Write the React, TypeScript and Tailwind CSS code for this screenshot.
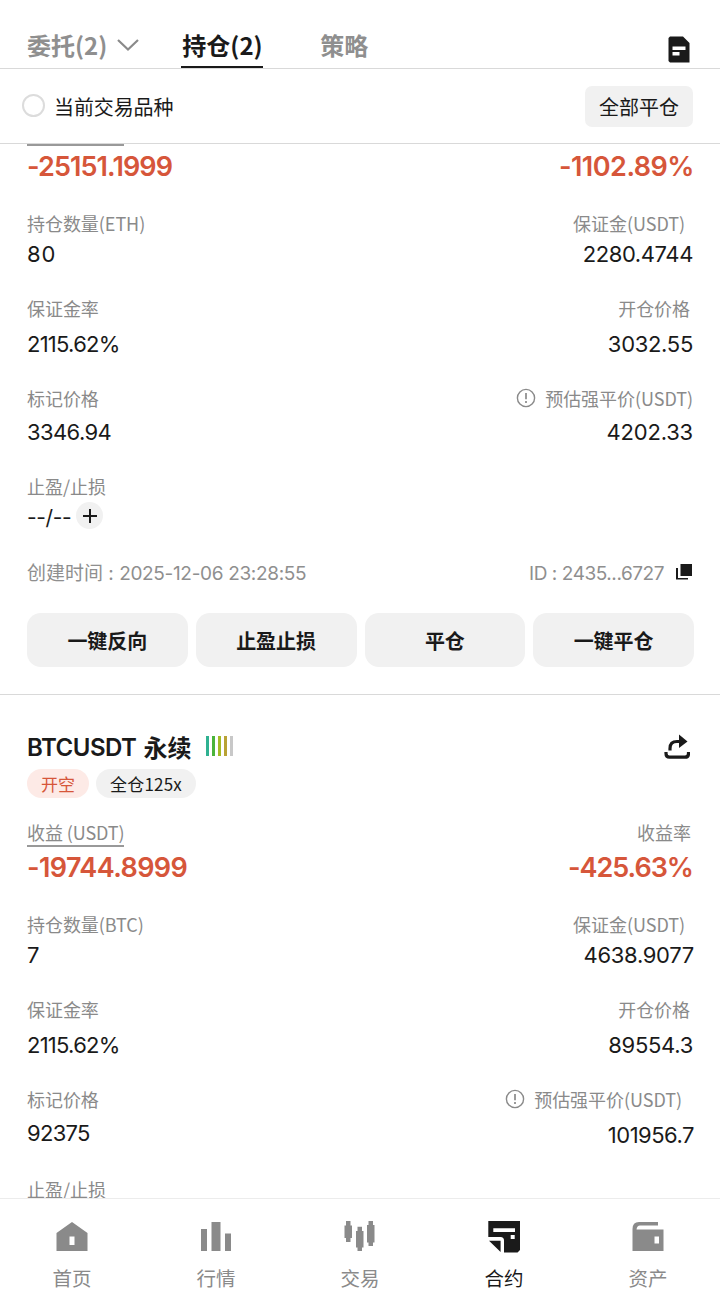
import clsx from "clsx";

interface Field {
  label: string;
  value: string;
  labelClass?: string;
  valueClass?: string;
  hint?: boolean;
}

interface Position {
  pnl: string;
  pnlClass: string;
  rate: string;
  rateClass: string;
  rows: { left: Field; right: Field; gap: string }[];
}

const ethPosition: Position = {
  pnl: "-25151.1999",
  pnlClass: "tracking-[-0.9px]",
  rate: "-1102.89%",
  rateClass: "tracking-[-0.5px] -mr-px",
  rows: [
    {
      gap: "gap-0",
      left: { label: "持仓数量(ETH)", value: "80", valueClass: "h-[34px] tracking-[0.8px]" },
      right: {
        label: "保证金(USDT)",
        value: "2280.4744",
        labelClass: "pr-[8px]",
        valueClass: "h-[34px] tracking-[-0.4px]",
      },
    },
    {
      gap: "gap-[5px]",
      left: { label: "保证金率", value: "2115.62%", valueClass: "h-[34px] tracking-[-0.75px]" },
      right: {
        label: "开仓价格",
        value: "3032.55",
        labelClass: "pr-[3px]",
        valueClass: "h-[34px] tracking-[-0.3px]",
      },
    },
    {
      gap: "gap-[3px]",
      left: { label: "标记价格", value: "3346.94", valueClass: "h-[34px] tracking-[-0.6px]" },
      right: {
        label: "预估强平价(USDT)",
        value: "4202.33",
        valueClass: "h-[34px] tracking-[-0.2px]",
        hint: true,
      },
    },
  ],
};

const btcPosition: Position = {
  pnl: "-19744.8999",
  pnlClass: "tracking-[-0.6px]",
  rate: "-425.63%",
  rateClass: "tracking-[-1px]",
  rows: [
    {
      gap: "gap-0",
      left: { label: "持仓数量(BTC)", value: "7", valueClass: "h-[34px]" },
      right: {
        label: "保证金(USDT)",
        value: "4638.9077",
        labelClass: "pr-[8px]",
        valueClass: "h-[34px] tracking-[-0.3px] -mr-px",
      },
    },
    {
      gap: "gap-[5px]",
      left: { label: "保证金率", value: "2115.62%", valueClass: "h-[34px] tracking-[-0.75px]" },
      right: {
        label: "开仓价格",
        value: "89554.3",
        labelClass: "pr-[3px]",
        valueClass: "h-[34px] tracking-[-0.3px]",
      },
    },
    {
      gap: "gap-[3px]",
      left: { label: "标记价格", value: "92375", valueClass: "h-[34px] tracking-[-0.7px]" },
      right: {
        label: "预估强平价(USDT)",
        value: "101956.7",
        labelClass: "pr-[11px]",
        valueClass: "h-[36px] pt-[2px] tracking-[-0.5px] -mr-px",
        hint: true,
      },
    },
  ],
};

const InfoIcon = () => (
  <svg width="20" height="20" viewBox="0 0 20 20" fill="none" stroke="#8a8a8a" className="mr-[9px] -mt-px">
    <circle cx="10" cy="10" r="8.6" strokeWidth="1.4" />
    <path d="M10 5v6.2M10 13v2" strokeWidth="1.7" />
  </svg>
);

const FieldCell = ({ field, gap, right }: { field: Field; gap: string; right?: boolean }) => (
  <div className={clsx("flex flex-col", gap, right && "items-end")}>
    <div
      className={clsx(
        "flex h-[26px] items-center pb-[2px] text-[18px] leading-[24px] tracking-[-0.05px] text-[#8a8a8a]",
        field.labelClass
      )}
    >
      {field.hint && <InfoIcon />}
      {field.label}
    </div>
    <div className={clsx("font-['Inter',sans-serif] text-[22px] leading-[34px]", field.valueClass)}>
      {field.value}
    </div>
  </div>
);

const PositionBody = ({ position }: { position: Position }) => (
  <>
    <div className="flex h-[40px] items-center justify-between pt-[2px] font-['Inter',sans-serif] text-[27px] font-semibold leading-[38px] text-[#d6563a]">
      <span className={position.pnlClass}>{position.pnl}</span>
      <span className={position.rateClass}>{position.rate}</span>
    </div>
    {position.rows.map((row, index) => (
      <div key={index} className="flex justify-between pt-[25px]">
        <FieldCell field={row.left} gap={row.gap} />
        <FieldCell field={row.right} gap={row.gap} right />
      </div>
    ))}
    <div className="pb-px pt-[24px] text-[18px] leading-[26px] text-[#8a8a8a]">止盈/止损</div>
  </>
);

const actions = ["一键反向", "止盈止损", "平仓", "一键平仓"];

const navItems = [
  {
    label: "首页",
    icon: (
      <path fillRule="evenodd" d="M0.5 12 16 1l15.500 11V30H0.500zM13.500 15.500v8.500h5v-8.500z" />
    ),
  },
  {
    label: "行情",
    icon: <path d="M1 8h6v22H1zM11.500 1h9v29h-9zM25 12.500h6V30h-6z" />,
  },
  {
    label: "交易",
    icon: (
      <path d="M2 0h4.500v4.500H8V17H6.500v4H2v-4H.5V4.500H2zM13.500 5.700H18V10h1.500v16.500H18V30h-4.500v-3.500H12V10h1.500zM24.500 0H29v4h1.500v17.500H29V25h-4.500v-3.500H23V4h1.500z" />
    ),
  },
  {
    label: "合约",
    active: true,
    icon: (
      <path
        fillRule="evenodd"
        d="M0.300 0H32v29l-2.500 2.500H16V19.500Q16 16 12.500 16H0.300zM5.300 7.300V11H27V7.300zM22.700 14v4h4v-4zM1 19.700h11.600V31z"
      />
    ),
  },
  {
    label: "资产",
    icon: (
      <path
        fillRule="evenodd"
        d="M7 1h19v3.500H8q-3 0-3.500 4h27V30H0.500V8q0-7 6.500-7zM22.500 15.500v7H27v-7z"
      />
    ),
  },
];

export default function App() {
  return (
    <div className="flex h-[1304px] w-[720px] flex-col overflow-hidden bg-white font-['Noto_Sans_CJK_SC',sans-serif] text-[#1a1a1a]">
      {/* Tabs */}
      <header className="flex h-[69px] shrink-0 items-end border-b border-[#d9d9d9] pl-[27px] pr-[28px] text-[24px] font-bold leading-[36px]">
        <div className="flex h-[41px] items-start text-[#8f8f8f]">
          委托(2)
          <svg width="22" height="14" viewBox="0 0 22 14" fill="none" stroke="#8a8a8a" strokeWidth="2.2" className="ml-[10px] mt-[11px]">
            <path d="M1 2l10 9.500L21 2" />
          </svg>
        </div>
        <div className="ml-[42px] h-[41px] w-[82px] whitespace-nowrap border-b-2 border-[#1a1a1a] pl-px">持仓(2)</div>
        <div className="ml-[57px] h-[41px] text-[#8f8f8f]">策略</div>
        <svg width="22" height="27" viewBox="0 0 22 27" className="mb-[5px] ml-auto mr-[2px]" fill="#1a1a1a">
          <path fillRule="evenodd" d="M2 .5h13L21.500 7v19.500H2L.5 25V2zM4.500 10.500v3.500h13v-3.500zM4.500 16v3.500h7V16z" />
        </svg>
      </header>

      {/* Filter */}
      <div className="flex h-[75px] shrink-0 items-center justify-between border-b border-[#d9d9d9] pl-[22px] pr-[27px] text-[20px]">
        <label className="-mt-px flex items-center gap-[9px] tracking-[-0.1px]">
          <span className="size-[23px] rounded-full border-2 border-[#dcdcdc]" />
          <span className="pt-[2px]">当前交易品种</span>
        </label>
        <button className="h-[41px] w-[108px] rounded-[7px] bg-[#f1f1f1] pt-[2px]">全部平仓</button>
      </div>

      <main className="min-h-0 flex-1 overflow-hidden">
        <section className="border-b border-[#d9d9d9] px-[27px] pb-[27px]">
          <div className="h-[2px] w-[97px] bg-[#999]" />
          <PositionBody position={ethPosition} />
          <div className="flex h-[34px] items-center font-['Inter',sans-serif] text-[21px] tracking-[-0.4px]">
            <span className="pt-[2px]">--/--</span>
            <span className="-mt-[3px] ml-[5px] flex size-[27px] items-center justify-center rounded-full bg-[#f1f1f1]">
              <svg width="14" height="14" viewBox="0 0 14 14" stroke="#1a1a1a" strokeWidth="2">
                <path d="M7 0v14M0 7h14" />
              </svg>
            </span>
          </div>
          <div className="mt-[27px] flex h-[26px] items-center justify-between font-['Inter','Noto_Sans_CJK_SC',sans-serif] text-[19px] text-[#8f8f8f]">
            <span>
              创建时间 : <span className="tracking-[-0.33px]">2025-12-06 23:28:55</span>
            </span>
            <span className="flex items-center tracking-[-0.45px]">
              ID : 2435...6727
              <svg width="16" height="16" viewBox="0 0 16 16" fill="#1a1a1a" className="-mt-[5px] ml-[12px] mr-[1px]">
                <path d="M4.500 0H16v12H4.500zM0 4h2v10h10v1.500H0z" />
              </svg>
            </span>
          </div>
          <div className="-mr-px mt-[26px] grid grid-cols-4 gap-[8px]">
            {actions.map((action) => (
              <button key={action} className="h-[54px] rounded-[14px] bg-[#f1f1f1] pt-[2px] text-[20px] font-bold">
                {action}
              </button>
            ))}
          </div>
        </section>

        <section className="px-[27px] pt-[36px]">
          <div className="flex h-[32px] items-center justify-between">
            <div className="flex items-center text-[24px]">
              <span className="pt-px font-['Inter',sans-serif] font-semibold tracking-[-0.5px]">BTCUSDT</span>
              <span className="-mt-px ml-[7px] font-bold">永续</span>
              <div className="-mt-[2px] ml-[15px] flex gap-[3px]">
                <i className="h-[20px] w-[3px] bg-[#2fb191]" />
                <i className="h-[20px] w-[3px] bg-[#4bb43a]" />
                <i className="h-[20px] w-[3px] bg-[#a3bb25]" />
                <i className="h-[20px] w-[3px] bg-[#b9a235]" />
                <i className="h-[20px] w-[3px] bg-[#c8c8c8]" />
              </div>
            </div>
            <svg width="26" height="26" viewBox="0 0 26 26" className="mr-[3px]" fill="none" stroke="#1a1a1a" strokeWidth="3.2">
              <path d="M6 16.500v-2Q6 7.500 13 7.500h3" />
              <path d="M15 .5l8.500 7-8.500 6.500z" fill="#1a1a1a" stroke="none" />
              <path d="M2 18v1.500q0 3.700 3.500 3.700h15.500q3.500 0 3.500-3.700V18" />
            </svg>
          </div>
          <div className="mt-[6px] flex gap-[7px] text-[17px] leading-[29px]">
            <span className="h-[29px] w-[62px] rounded-full bg-[#fdeae6] text-center text-[#d6563a]">开空</span>
            <span className="h-[29px] w-[100px] rounded-full bg-[#f1f1f1] text-center tracking-[0.2px]">全仓125x</span>
          </div>
          <div className="mt-[21px] flex justify-between text-[18px] leading-[26px] text-[#8a8a8a]">
            <span className="h-[28px] w-[97px] whitespace-nowrap border-b-2 border-[#999] tracking-[-0.1px]">收益 (USDT)</span>
            <span className="pr-[2px]">收益率</span>
          </div>
          <PositionBody position={btcPosition} />
        </section>
      </main>

      {/* Bottom navigation */}
      <nav className="grid h-[106px] shrink-0 grid-cols-5 border-t border-[#ececec] bg-white pt-[22px]">
        {navItems.map((item) => (
          <div
            key={item.label}
            className={clsx(
              "flex flex-col items-center gap-[10px] text-[19.5px] leading-[30px]",
              item.active ? "text-[#1a1a1a]" : "text-[#8a8a8a]"
            )}
          >
            <svg width="32" height="32" viewBox="0 0 32 32" fill="currentColor">
              {item.icon}
            </svg>
            {item.label}
          </div>
        ))}
      </nav>
    </div>
  );
}
